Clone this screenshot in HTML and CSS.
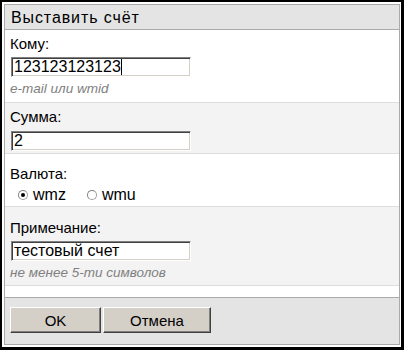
FILE: index.html
```html
<!DOCTYPE html>
<html lang="ru">
<head>
<meta charset="utf-8">
<title>Выставить счёт</title>
<link rel="stylesheet" href="styles.css">
</head>
<body>
<div class="window">
  <div class="panel">
    <div class="title">Выставить счёт</div>
    <div class="sec sec-to">
      <div class="label">Кому:</div>
      <div class="field" role="textbox">123123123123<span class="caret"></span></div>
      <div class="hint">e-mail или wmid</div>
    </div>
    <div class="sec sec-sum alt">
      <div class="label">Сумма:</div>
      <div class="field" role="textbox">2</div>
    </div>
    <div class="sec sec-cur">
      <div class="label">Валюта:</div>
      <div class="radios">
        <span class="opt"><span class="radio checked"></span>wmz</span>
        <span class="opt"><span class="radio"></span>wmu</span>
      </div>
    </div>
    <div class="sec sec-note alt">
      <div class="label">Примечание:</div>
      <div class="field" role="textbox">тестовый счет</div>
      <div class="hint">не менее 5-ти символов</div>
    </div>
    <div class="spacer"></div>
    <div class="footer">
      <button class="btn btn-ok" type="button">OK</button>
      <button class="btn btn-cancel" type="button">Отмена</button>
    </div>
  </div>
</div>
</body>
</html>
```

FILE: styles.css
```css
html, body {
  margin: 0;
  padding: 0;
  background: #fff;
}
body {
  font-family: "Liberation Sans", Arial, sans-serif;
  font-size: 15px;
  color: #000;
}
.window {
  width: 404px;
  height: 350px;
  box-sizing: border-box;
  border: 2px solid #000;
  border-right-width: 3px;
  border-bottom-width: 3px;
  padding: 2px 1px 2px 2px;
  background: #fff;
}
.panel {
  height: 100%;
  box-sizing: border-box;
  border: 1px solid #aaa;
  display: flex;
  flex-direction: column;
}
.title {
  flex: none;
  height: 24px;
  line-height: 26px;
  background: #e4e4e4;
  border-bottom: 1px solid #aaa;
  padding-left: 6px;
  font-size: 16px;
  letter-spacing: 0.9px;
}
.sec {
  flex: none;
  box-sizing: border-box;
  display: flex;
  flex-direction: column;
  align-items: flex-start;
  padding: 5px 5px 0;
  border-bottom: 1px solid #ddd;
  background: #fff;
}
.sec.alt {
  background: #f3f3f3;
}
.label {
  line-height: 18px;
  height: 18px;
  margin-bottom: 4px;
}
.sec-to { height: 73px; }
.sec-sum { height: 51px; }
.sec-sum .label { margin-bottom: 5px; }
.sec-cur { height: 53px; padding-top: 11px; }
.sec-cur .label { margin-bottom: 0; }
.sec-note { height: 79px; padding-top: 12px; }
.field {
  box-sizing: border-box;
  width: 180px;
  height: 20px;
  margin-left: 1px;
  border: 1px solid;
  border-color: #808080 #fff #fff #808080;
  box-shadow: inset 1px 1px 0 #404040, inset -1px -1px 0 #d4d0c8;
  background: #fff;
  font-size: 16px;
  line-height: 18px;
  padding-left: 2px;
  white-space: nowrap;
  overflow: hidden;
}
.caret {
  display: inline-block;
  width: 1px;
  height: 16px;
  margin-top: 1px;
  background: #000;
  vertical-align: top;
}
.hint {
  font-size: 13.5px;
  font-style: italic;
  color: #808080;
  line-height: 16px;
  margin-top: 4px;
}
.radios {
  display: flex;
  gap: 21px;
  padding-left: 8px;
  margin-top: 3px;
  line-height: 18px;
  font-size: 16px;
}
.opt {
  display: flex;
  align-items: center;
  gap: 5px;
}
.radio {
  width: 10px;
  height: 10px;
  box-sizing: border-box;
  border-radius: 50%;
  border: 1px solid #a0a0a0;
  border-top-color: #808080;
  border-left-color: #808080;
  background: #fff;
  position: relative;
}
.radio.checked::after {
  content: "";
  position: absolute;
  left: 2px;
  top: 2px;
  width: 4px;
  height: 4px;
  border-radius: 50%;
  background: #000;
}
.spacer {
  height: 11px;
  flex: none;
}
.footer {
  flex: 1;
  background: #e4e4e4;
  border-top: 1px solid #aaa;
  display: flex;
  gap: 2px;
  padding: 9px 0 0 5px;
  align-items: flex-start;
}
.btn {
  font-family: "Liberation Sans", Arial, sans-serif;
  font-size: 15px;
  height: 26px;
  background: #d4d0c8;
  border: 1px solid;
  border-color: #fff #404040 #404040 #fff;
  box-shadow: inset -1px -1px 0 #808080;
  padding: 0;
  color: #000;
}
.btn-ok { width: 91px; }
.btn-cancel { width: 108px; }
```
